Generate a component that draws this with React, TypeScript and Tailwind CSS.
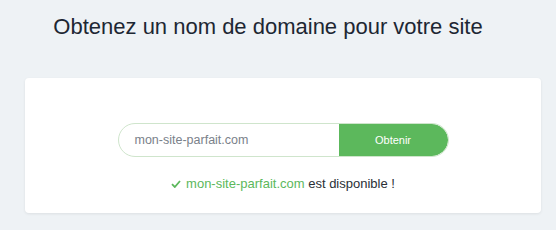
import React from 'react'

export default function App(): JSX.Element {
  return (
    <div className="w-[556px] h-[230px] bg-[#eef2f5] pt-[14px] font-['Liberation_Sans',Arial,sans-serif]">
      <h1 className="text-center text-[22px] leading-[25px] text-[#1d2733] pr-[20px]">Obtenez un nom de domaine pour votre site</h1>

      <div className="ml-[25px] mr-[15px] mt-[39px] h-[135px] bg-white rounded-[4px] shadow-[0_1px_3px_rgba(0,0,0,0.08)] flex flex-col items-center pt-[45px]">
        <div className="flex w-[331px] h-[34px] rounded-full border border-[#cfe5cc] overflow-hidden">
          <div className="flex-1 flex items-center pl-[16px] text-[12.5px] text-[#7a818a]">mon-site-parfait.com</div>
          <button className="w-[109px] h-full bg-[#5cb85c] text-white text-[11px] rounded-r-full">Obtenir</button>
        </div>
        <div className="mt-[17px] flex items-center text-[13px] text-[#2a2f36]">
          <svg width="10" height="8" viewBox="0 0 10 8" className="mr-[5px]">
            <path d="M1 4.2 L3.8 7 L9 1" fill="none" stroke="#5cb85c" strokeWidth="1.8" />
          </svg>
          <span className="text-[#5cb85c]">mon-site-parfait.com</span>
          <span>&nbsp;est disponible !</span>
        </div>
      </div>
    </div>
  )
}
